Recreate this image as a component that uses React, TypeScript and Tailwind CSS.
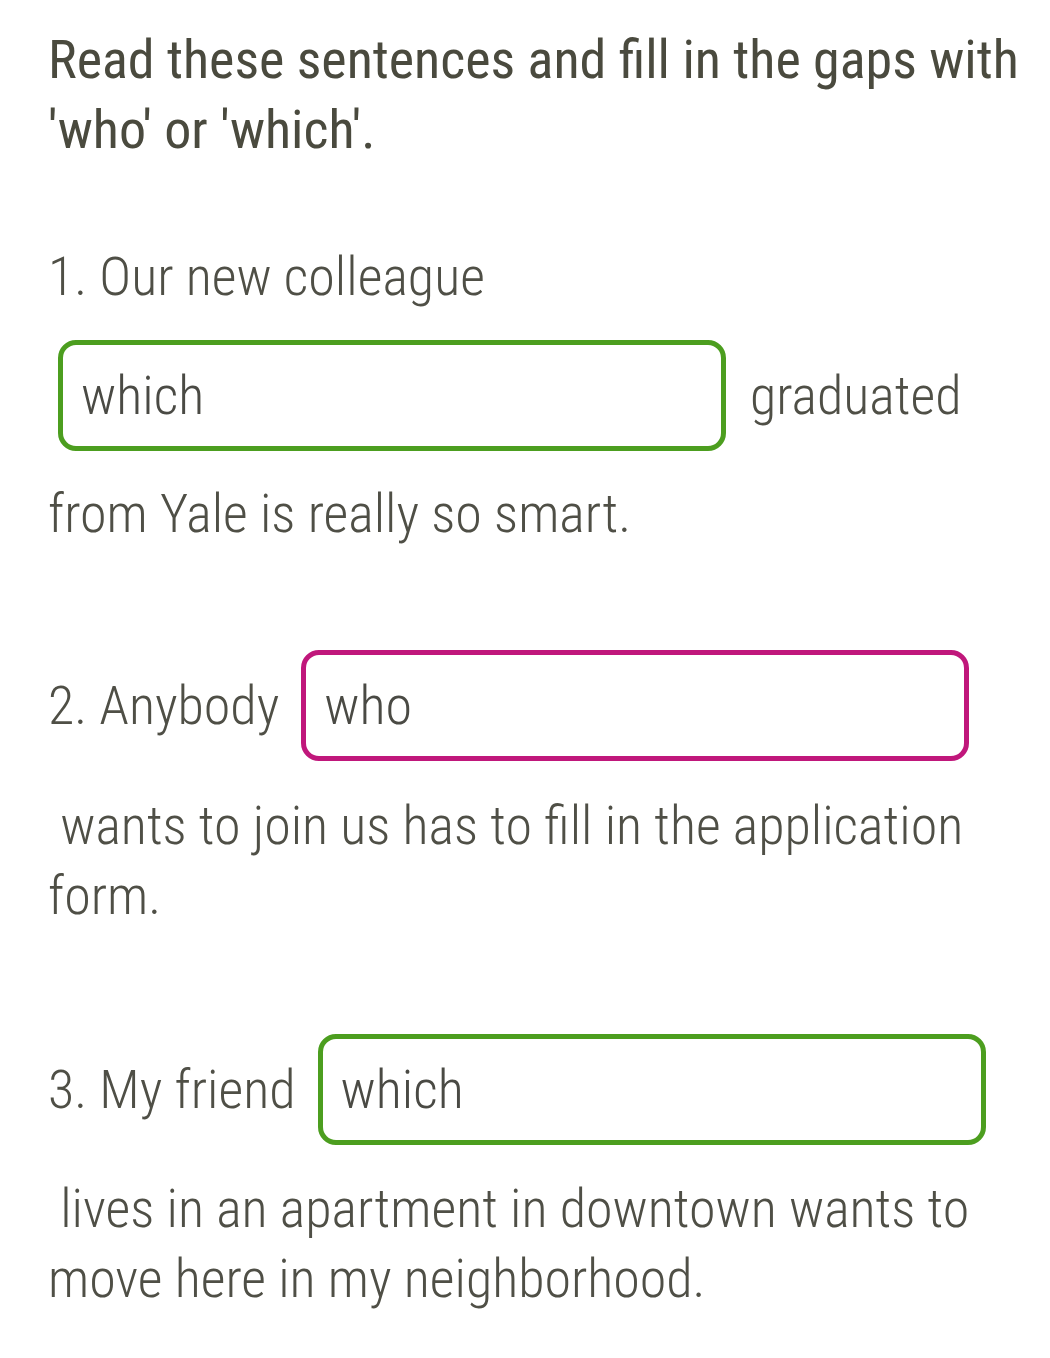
export default function App() {
  const font = { fontFamily: 'Roboto, "Noto Sans", sans-serif' };

  const Gap = ({ value, tone }: { value: string; tone: 'green' | 'pink' }) => (
    <div
      className={`flex h-[111px] w-[668px] shrink-0 items-center rounded-[18px] border-[5px] bg-white pl-[18px] font-light text-[#4a4a44] ${
        tone === 'green' ? 'border-[#4c9e1f]' : 'border-[#c0177b]'
      }`}
    >
      {value}
    </div>
  );

  return (
    <div
      className="min-h-screen bg-white pl-[48px] pr-[20px] pt-[25px] text-[54px] leading-[70px] font-stretch-condensed"
      style={font}
    >
      {/* Instructions */}
      <h1 className="font-normal text-[#4a4a3e]">
        Read these sentences and fill in the gaps with 'who' or 'which'.
      </h1>

      <div className="mt-[77px] flex flex-col font-light text-[#4f4f46]">
        {/* Question 1 */}
        <div className="flex flex-col gap-[28px]">
          <p>1. Our new colleague</p>
          <div className="flex items-center gap-[24px] pl-[10px]">
            <Gap value="which" tone="green" />
            <span>graduated</span>
          </div>
          <p>from Yale is really so smart.</p>
        </div>

        {/* Question 2 */}
        <div className="mt-[101px] flex flex-col gap-[30px]">
          <div className="flex items-center gap-[22px]">
            <span>2. Anybody</span>
            <Gap value="who" tone="pink" />
          </div>
          <p className="pr-[60px]">&nbsp;wants to join us has to fill in the application form.</p>
        </div>

        {/* Question 3 */}
        <div className="mt-[103px] flex flex-col gap-[29px]">
          <div className="flex items-center gap-[22px]">
            <span>3. My friend</span>
            <Gap value="which" tone="green" />
          </div>
          <p className="pr-[50px]">&nbsp;lives in an apartment in downtown wants to move here in my neighborhood.</p>
        </div>
      </div>
    </div>
  );
}
